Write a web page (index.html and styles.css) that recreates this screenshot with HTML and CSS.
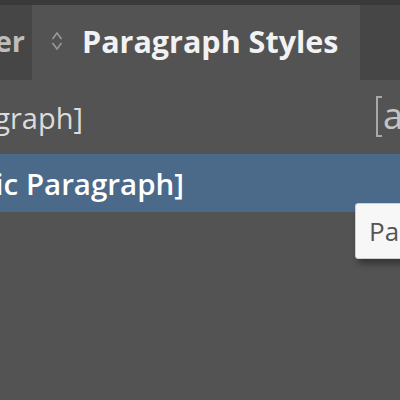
FILE: index.html
```html
<!DOCTYPE html>
<html>
<head>
<meta charset="utf-8">
<link rel="stylesheet" href="styles.css">
</head>
<body>
<div class="panel">
  <div class="tabs">
    <div class="tab inactive left"><span class="tab-label">Character</span></div>
    <div class="tab active">
      <svg class="grip" width="12" height="24" viewBox="0 0 12 24"><path d="M1.5 10 L6 4 L10.5 10 M1.5 14 L6 20 L10.5 14" fill="none" stroke="#9a9a9a" stroke-width="1.6"/></svg>
      <span class="tab-title">Paragraph Styles</span>
    </div>
    <div class="tab inactive right"></div>
  </div>
  <div class="list">
    <div class="row">
      <div class="label-box first"><span class="label">[Basic Paragraph]</span></div>
      <span class="style-icon"><span class="bracket"></span><span class="icon-a">a</span></span>
    </div>
    <div class="row selected">
      <div class="label-box second"><span class="label">[Basic Paragraph]</span></div>
    </div>
  </div>
  <div class="tooltip">Paragraph Styles</div>
</div>
</body>
</html>
```
FILE: styles.css
```css
html, body {
  margin: 0;
  padding: 0;
  width: 400px;
  height: 400px;
  overflow: hidden;
  background: #535353;
  font-family: "Open Sans", "Noto Sans", sans-serif;
}
.panel {
  position: relative;
  width: 400px;
  height: 400px;
  overflow: hidden;
}
.tabs {
  display: flex;
  height: 80px;
  padding-top: 5px;
  box-sizing: border-box;
  background: #3a3a3a;
}
.tab {
  height: 75px;
  display: flex;
  align-items: center;
  overflow: hidden;
  box-sizing: border-box;
}
.tab.inactive { background: #464646; }
.tab.left {
  width: 32px;
  justify-content: flex-end;
}
.tab-label {
  font-weight: 700;
  font-size: 29px;
  color: #bdbdbd;
  white-space: nowrap;
  margin-right: 7px;
  margin-top: -4px;
}
.tab.active {
  width: 328px;
  background: #535353;
  padding-left: 19px;
}
.grip { margin-top: -4px; }
.tab-title {
  margin-left: 19px;
  margin-top: -4px;
  font-weight: 700;
  font-size: 30.5px;
  color: #f2f2f2;
  white-space: nowrap;
}
.tab.right { flex: 1; }
.list { padding-top: 15px; }
.row {
  height: 45px;
  display: flex;
  align-items: center;
  position: relative;
  white-space: nowrap;
}
.row.selected {
  margin-top: 14px;
  height: 58px;
  background: #4b6a8a;
}
.label-box {
  display: flex;
  justify-content: flex-end;
}
.label-box.first { width: 83px; }
.label-box.second { width: 184px; }
.label {
  font-size: 29px;
  color: #dcdcdc;
  white-space: nowrap;
}
.second .label { font-size: 29.5px; color: #ffffff; font-weight: 600; }
.style-icon {
  position: absolute;
  left: 376px;
  top: 2px;
  height: 40px;
  display: flex;
  align-items: flex-end;
}
.bracket {
  width: 4px;
  height: 37px;
  border: 2px solid #a8a8a8;
  border-right: none;
}
.icon-a {
  font-size: 36px;
  line-height: 36px;
  color: #c4c4c4;
  margin-left: 1px;
  margin-bottom: 3px;
}
.tooltip {
  position: absolute;
  left: 355px;
  top: 203px;
  height: 54px;
  padding: 0 13px;
  display: flex;
  align-items: center;
  background: #f7f7f7;
  border: 1px solid #cfcfcf;
  border-radius: 3px;
  font-size: 26px;
  color: #555;
  white-space: nowrap;
  box-shadow: 3px 5px 6px rgba(0,0,0,0.35);
}
```
